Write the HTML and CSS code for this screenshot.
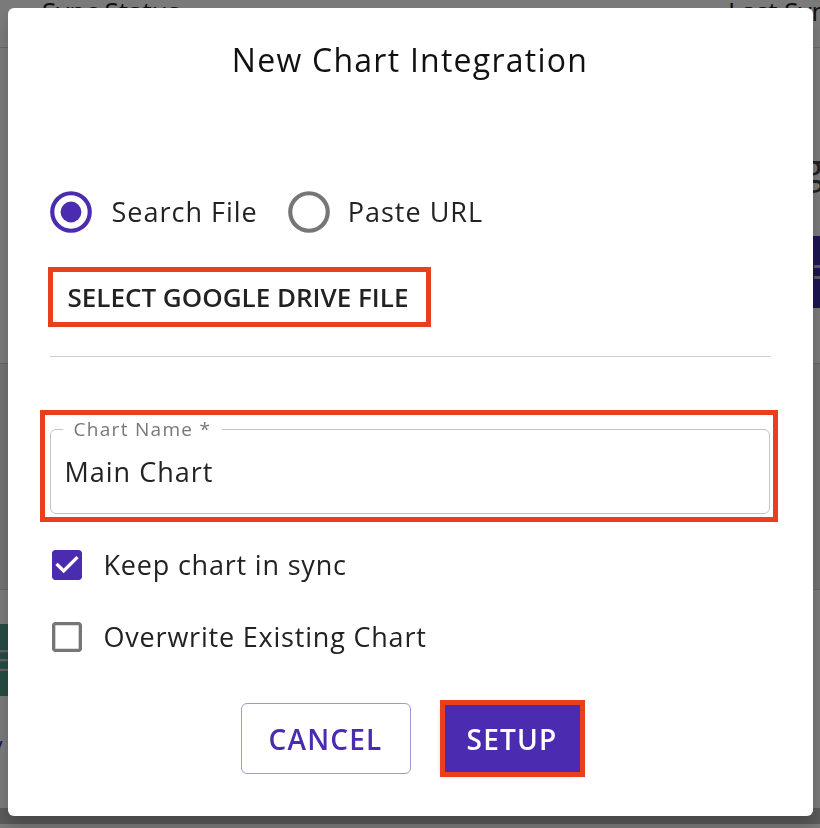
FILE: index.html
```html
<!DOCTYPE html>
<html lang="en">
<head>
  <meta charset="UTF-8" />
  <meta name="viewport" content="width=device-width, initial-scale=1.0" />
  <title>New Chart Integration</title>
  <link rel="stylesheet" href="styles.css">
</head>
<body>
  <!-- Page behind the dialog -->
  <div class="page">
    <div class="page-header">
      <span>Sync Status</span>
      <span>Last Sync</span>
    </div>
    <div class="page-title">Integrating</div>
    <div class="page-actions">
      <span class="btn-dark"><span class="btn-dark-icon"></span></span>
    </div>
    <div class="page-row"></div>
    <div class="page-row page-row-left"></div>
    <div class="page-teal"><span>E</span></div>
    <div class="page-link">/</div>
  </div>

  <!-- Modal -->
  <div class="overlay">
    <div class="dialog">
      <h2 class="dialog-title">New Chart Integration</h2>

      <div class="radio-group">
        <label class="radio">
          <svg class="radio-icon checked" viewBox="0 0 24 24">
            <circle cx="12" cy="12" r="9" fill="none" stroke="currentColor" stroke-width="2" />
            <circle cx="12" cy="12" r="5" fill="currentColor" />
          </svg>
          <span>Search File</span>
        </label>
        <label class="radio">
          <svg class="radio-icon" viewBox="0 0 24 24">
            <circle cx="12" cy="12" r="9" fill="none" stroke="currentColor" stroke-width="2" />
          </svg>
          <span>Paste URL</span>
        </label>
      </div>

      <button type="button" class="btn-text highlight">Select Google Drive File</button>

      <hr class="divider" />

      <div class="field-wrap highlight-box">
        <fieldset class="field">
          <legend>Chart Name *</legend>
          <input type="text" value="Main Chart" />
        </fieldset>
      </div>

      <label class="check">
        <svg class="check-icon checked" viewBox="0 0 24 24">
          <path fill="currentColor" d="M19 3H5c-1.11 0-2 .9-2 2v14c0 1.1.89 2 2 2h14c1.11 0 2-.9 2-2V5c0-1.1-.89-2-2-2zm-9 14l-5-5 1.41-1.41L10 14.17l7.59-7.59L19 8l-9 9z" />
        </svg>
        <span>Keep chart in sync</span>
      </label>
      <label class="check">
        <svg class="check-icon" viewBox="0 0 24 24">
          <path fill="currentColor" d="M19 5v14H5V5h14m0-2H5c-1.1 0-2 .9-2 2v14c0 1.1.9 2 2 2h14c1.1 0 2-.9 2-2V5c0-1.1-.9-2-2-2z" />
        </svg>
        <span>Overwrite Existing Chart</span>
      </label>

      <div class="actions">
        <button type="button" class="btn-outline">Cancel</button>
        <button type="button" class="btn-primary highlight">Setup</button>
      </div>
    </div>
  </div>
</body>
</html>
```

FILE: styles.css
```css
/* --- Reset --- */
* {
  margin: 0;
  padding: 0;
  box-sizing: border-box;
}
html,
body {
  height: 100%;
  font-family: "Open Sans", "Noto Sans", sans-serif;
  color: #222;
  background: #ffffff;
  overflow: hidden;
}

/* --- Page behind the modal --- */
.page {
  height: 100%;
  background: linear-gradient(#ffffff 0, #ffffff 812px, #bdbdbd 812px);
}
.page-header {
  display: flex;
  justify-content: space-between;
  margin-top: -4px;
  padding: 0 0 0 42px;
  height: 52px;
  border-bottom: 1px solid #d8d8d8;
  font-size: 26px;
  line-height: 30px;
  font-weight: 500;
}
.page-header span:last-child {
  margin-right: -20px;
}
.page-title {
  text-align: right;
  font-size: 40px;
  line-height: 50px;
  color: #444;
  margin-top: 95px;
  margin-right: -4px;
}
.page-actions {
  display: flex;
  justify-content: flex-end;
  margin-top: 43px;
}
.btn-dark {
  width: 30px;
  height: 72px;
  background: #3b2ea8;
  margin-right: -20px;
  display: flex;
  align-items: center;
}
.btn-dark-icon {
  width: 14px;
  height: 14px;
  margin-left: 4px;
  border-top: 3px solid #c0c0e0;
  border-bottom: 3px solid #c0c0e0;
}
.page-row {
  height: 56px;
  border-bottom: 1px solid #d8d8d8;
}
.page-row-left {
  height: 226px;
  background: #eeeeee;
}
.page-teal {
  width: 60px;
  height: 72px;
  margin-top: 34px;
  margin-left: -50px;
  background: #4e9c8c;
  color: #cccccc;
  font-size: 30px;
  text-align: right;
  line-height: 72px;
}
.page-link {
  color: #3b2ea8;
  font-size: 24px;
  margin-top: 36px;
  margin-left: -6px;
}

/* --- Modal --- */
.overlay {
  position: fixed;
  inset: 0;
  background: rgba(0, 0, 0, 0.52);
  display: flex;
  justify-content: center;
  align-items: flex-start;
  padding: 8px 8px 0 8px;
}
.dialog {
  width: 805px;
  height: 808px;
  background: #ffffff;
  border-radius: 6px;
  box-shadow: 0 11px 15px rgba(0, 0, 0, 0.2);
  padding: 32px 42px 0;
  display: flex;
  flex-direction: column;
  align-items: flex-start;
}
.dialog-title {
  align-self: stretch;
  text-align: center;
  font-size: 32px;
  line-height: 40px;
  font-weight: 400;
  letter-spacing: 1.25px;
  color: #111;
}

/* --- Radios --- */
.radio-group {
  display: flex;
  margin-top: 107px;
  margin-left: -4px;
}
.radio {
  display: flex;
  align-items: center;
  gap: 16px;
  margin-right: 26px;
  font-size: 27px;
  line-height: 50px;
  letter-spacing: 1px;
}
.radio + .radio {
  gap: 14px;
}
.radio-icon {
  width: 50px;
  height: 50px;
  color: #767676;
}
.radio-icon.checked {
  color: #4b2bb0;
}

/* --- Annotation boxes --- */
.highlight {
  outline: 5px solid #e8401c;
}
.highlight-box {
  border: 5px solid #e8401c;
}

/* --- Select file button --- */
.btn-text {
  margin-top: 35px;
  margin-left: 3px;
  height: 50px;
  width: 373px;
  padding: 0 15px;
  border: none;
  background: none;
  font-family: inherit;
  font-size: 26px;
  font-weight: 600;
  text-align: left;
  text-transform: uppercase;
  color: #222;
}

.divider {
  align-self: stretch;
  margin-top: 34px;
  border: none;
  border-top: 1px solid #cfcfcf;
}

/* --- Text field --- */
.field-wrap {
  margin-top: 53px;
  margin-left: -10px;
  width: 738px;
  padding: 4px 3px 3px 5px;
}
.field {
  border: 1px solid #c4c4c4;
  border-radius: 6px;
  padding: 0 12px 10px;
}
.field legend {
  padding: 0 11px;
  font-size: 19px;
  line-height: 20px;
  letter-spacing: 1.3px;
  color: #777;
}
.field input {
  display: block;
  width: 100%;
  height: 64px;
  border: none;
  outline: none;
  padding: 0 2px;
  font-family: inherit;
  font-size: 27px;
  letter-spacing: 1px;
  color: #222;
}

/* --- Checkboxes --- */
.check {
  display: flex;
  align-items: center;
  gap: 17px;
  margin-left: -3px;
  font-size: 27px;
  line-height: 40px;
  letter-spacing: 0.8px;
}
.check + .check {
  margin-top: 32px;
}
.field-wrap + .check {
  margin-top: 23px;
}
.check-icon {
  width: 40px;
  height: 40px;
  color: #767676;
}
.check-icon.checked {
  color: #4b2bb0;
}

/* --- Footer buttons --- */
.actions {
  align-self: stretch;
  display: flex;
  justify-content: center;
  align-items: center;
  gap: 34px;
  margin-top: 46px;
}
.btn-outline,
.btn-primary {
  font-family: inherit;
  font-size: 28px;
  font-weight: 600;
  letter-spacing: 1.2px;
  text-transform: uppercase;
  border-radius: 6px;
  cursor: pointer;
}
.btn-outline {
  width: 170px;
  height: 71px;
  background: #ffffff;
  border: 1px solid #a395dc;
  color: #4b2bb0;
}
.btn-primary {
  width: 135px;
  height: 67px;
  background: #4b2bb0;
  border: none;
  border-radius: 0;
  color: #ffffff;
  box-shadow: -3px 3px 6px rgba(0, 0, 0, 0.25);
}
```
